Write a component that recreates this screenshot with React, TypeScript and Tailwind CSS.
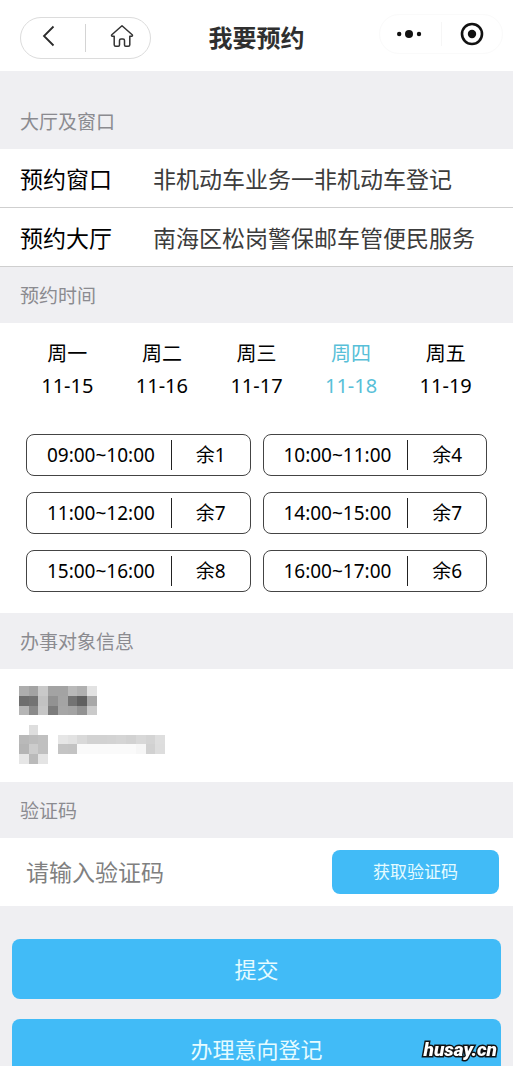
import { useState } from 'react'
import type { ReactNode } from 'react'
import clsx from 'clsx'

interface Day {
  label: string
  date: string
}

interface Slot {
  time: string
  left: number
}

const days: Day[] = [
  { label: '周一', date: '11-15' },
  { label: '周二', date: '11-16' },
  { label: '周三', date: '11-17' },
  { label: '周四', date: '11-18' },
  { label: '周五', date: '11-19' },
]

const slots: Slot[] = [
  { time: '09:00~10:00', left: 1 },
  { time: '10:00~11:00', left: 4 },
  { time: '11:00~12:00', left: 7 },
  { time: '14:00~15:00', left: 7 },
  { time: '15:00~16:00', left: 8 },
  { time: '16:00~17:00', left: 6 },
]

const details = [
  { label: '预约窗口', value: '非机动车业务一非机动车登记' },
  { label: '预约大厅', value: '南海区松岗警保邮车管便民服务' },
]

// one grey per cell, '' is left blank
const mosaic: string[][] = [
  ['#adadad', '#a3a3a3', '#c9c9c9', '#a3a3a3', '#a3a3a3', '#b9b9b9', '#b0b0b0', '#e2e2e2'],
  ['#6e6e6e', '#737373', '#c2c2c2', '#929292', '#a4a4a4', '#737373', '#606060', '#a8a8a8'],
  ['#b5b5b5', '#8a8a8a', '#c6c6c6', '#7c7c7c', '#a6a6a6', '#a3a3a3', '#929292', '#cacaca'],
  [],
  ['', '#dedede'],
  ['#b9b9b9', '#bdbdbd', '#c0c0c0', '', '#e6e6e6', '#e2e2e2', '#d9d9d9', '#d2d2d2', '#d2d2d2', '#d3d3d3', '#d5d5d5', '#d2d2d2', '#d8d8d8', '#d4d4d4', '#dedede'],
  ['#b5b5b5', '#cccccc', '#c0c0c0', '', '#c4c4c4', '#c3c3c3', '#fafafa', '#fafafa', '#fafafa', '#fafafa', '#fafafa', '#fafafa', '#f6f6f6', '#d1d1d1', '#dddddd'],
  ['#e6e6e6', '#bababa', '#e4e4e4'],
]

function SectionTitle({ tall, children }: { tall?: boolean; children: ReactNode }) {
  return (
    <h2 className={clsx('px-5 pb-[11px] text-[19px] leading-8 text-[#8b8b90]', tall ? 'pt-[35px]' : 'pt-[13px]')}>
      {children}
    </h2>
  )
}

function Header() {
  return (
    <header className="relative flex h-[71px] items-center justify-between bg-white pr-[10px] pl-5">
      <div className="mt-1 flex h-[42px] w-[131px] items-center rounded-full border border-[#dcdcdc]">
        <button aria-label="返回" className="flex h-full flex-1 items-center justify-center">
          <svg viewBox="0 0 24 24" className="mr-2 mb-1 size-6" fill="none" stroke="#2b2b2b" strokeWidth="1.8">
            <path d="M16.5 2.500 7 12l9.500 9.500" />
          </svg>
        </button>
        <span className="h-7 w-px bg-[#d4d4d4]" />
        <button aria-label="首页" className="flex h-full flex-1 items-center justify-center">
          <svg viewBox="0 0 24 24" className="mb-1 ml-2 size-6" fill="none" stroke="#333" strokeWidth="1.500" strokeLinejoin="round">
            <path d="M12 1.800 1.800 10.800c-.6.6-.2 1.400.5 1.400h1.900v8.600c0 1 .5 1.500 1.500 1.500h2.600c.8 0 1.200-.5 1.200-1.200v-4.500c0-1 .6-1.700 1.500-1.700h2c.9 0 1.500.7 1.500 1.700v4.500c0 .7.4 1.200 1.200 1.200h2.600c1 0 1.500-.5 1.500-1.500v-8.600h1.900c.7 0 1.100-.8.5-1.400z" />
          </svg>
        </button>
      </div>

      <h1 className="pointer-events-none absolute inset-x-20 top-5 text-center text-2xl leading-9 font-bold text-[#2f2f2f]">
        我要预约
      </h1>

      <div className="mb-1 flex h-10 w-[124px] items-center rounded-full border border-[#fafafa]">
        <button aria-label="更多" className="flex h-full flex-1 items-center justify-center">
          <svg viewBox="0 0 26 10" className="h-[10px] w-[26px]" fill="#111">
            <circle cx="2.200" cy="5" r="2.200" />
            <circle cx="12" cy="5" r="4" />
            <circle cx="22" cy="5" r="2.200" />
          </svg>
        </button>
        <span className="h-6 w-px bg-[#f6f6f6]" />
        <button aria-label="关闭" className="flex h-full flex-1 items-center justify-center">
          <svg viewBox="0 0 24 24" className="size-6">
            <circle cx="12" cy="12" r="10" fill="none" stroke="#111" strokeWidth="2.600" />
            <circle cx="12" cy="12" r="4.200" fill="#111" />
          </svg>
        </button>
      </div>
    </header>
  )
}

export default function App() {
  const [day, setDay] = useState('11-18')
  const [code, setCode] = useState('')

  return (
    <div className="min-h-screen bg-[#efeff2] pb-5 font-['Noto_Sans','Noto_Sans_CJK_SC',sans-serif] text-black">
      <Header />

      <SectionTitle tall>大厅及窗口</SectionTitle>
      <dl className="bg-white text-[23px] leading-[56px]">
        {details.map((item) => (
          <div key={item.label} className="flex border-b border-[#cfcfcf] px-5 pt-[2px]">
            <dt className="w-[133px] shrink-0">{item.label}</dt>
            <dd className="min-w-0 truncate text-[#3c3c3c]">{item.value}</dd>
          </div>
        ))}
      </dl>

      <SectionTitle>预约时间</SectionTitle>
      <section className="bg-white pt-[15px] pb-[21px]">
        <div className="grid grid-cols-5 px-5">
          {days.map((d) => (
            <button
              key={d.date}
              onClick={() => setDay(d.date)}
              className={clsx('flex flex-col items-center text-xl leading-8', d.date === day && 'text-[#58bfd8]')}
            >
              <span>{d.label}</span>
              <span>{d.date}</span>
            </button>
          ))}
        </div>

        <div className="mt-8 grid grid-cols-2 gap-x-3 gap-y-4 px-[26px]">
          {slots.map((slot) => (
            <button key={slot.time} className="flex h-[42px] items-center rounded-lg border border-[#444] text-[19px]">
              <span className="flex-[9] pl-1 text-center">{slot.time}</span>
              <span className="h-[30px] w-px bg-[#222]" />
              <span className="flex-[5] text-center">余{slot.left}</span>
            </button>
          ))}
        </div>
      </section>

      <SectionTitle>办事对象信息</SectionTitle>
      <section className="bg-white px-[19px] pt-[17px] pb-[18px]">
        <svg viewBox="0 0 15 8" className="h-[78px] w-[146px]" shapeRendering="crispEdges" aria-hidden="true">
          {mosaic.map((row, y) =>
            row.map((fill, x) => fill && <rect key={`${x}-${y}`} x={x} y={y} width="1" height="1" fill={fill} />)
          )}
        </svg>
      </section>

      <SectionTitle>
        <label htmlFor="code">验证码</label>
      </SectionTitle>
      <div className="flex items-center bg-white py-3 pr-[14px] pl-[26px]">
        <input
          id="code"
          value={code}
          onChange={(e) => setCode(e.target.value)}
          placeholder="请输入验证码"
          className="h-11 min-w-0 flex-1 text-[23px] outline-none placeholder:text-[#808080]"
        />
        <button className="h-11 w-[167px] shrink-0 rounded-lg bg-[#41bbf7] text-[17px] text-[#e6fbff]">获取验证码</button>
      </div>

      <div className="mt-[33px] flex flex-col gap-5 px-3 text-[22px] text-[#e6fbff]">
        <button className="h-[60px] rounded-lg bg-[#41bbf7]">提交</button>
        <button className="h-[60px] rounded-lg bg-[#41bbf7]">办理意向登记</button>
      </div>

      <a
        href="#"
        className="fixed right-4 bottom-1 font-[Roboto,sans-serif] text-[19px] leading-6 font-black text-white italic [-webkit-text-stroke:3px_#111] [paint-order:stroke_fill]"
      >
        husay.cn
      </a>
    </div>
  )
}
